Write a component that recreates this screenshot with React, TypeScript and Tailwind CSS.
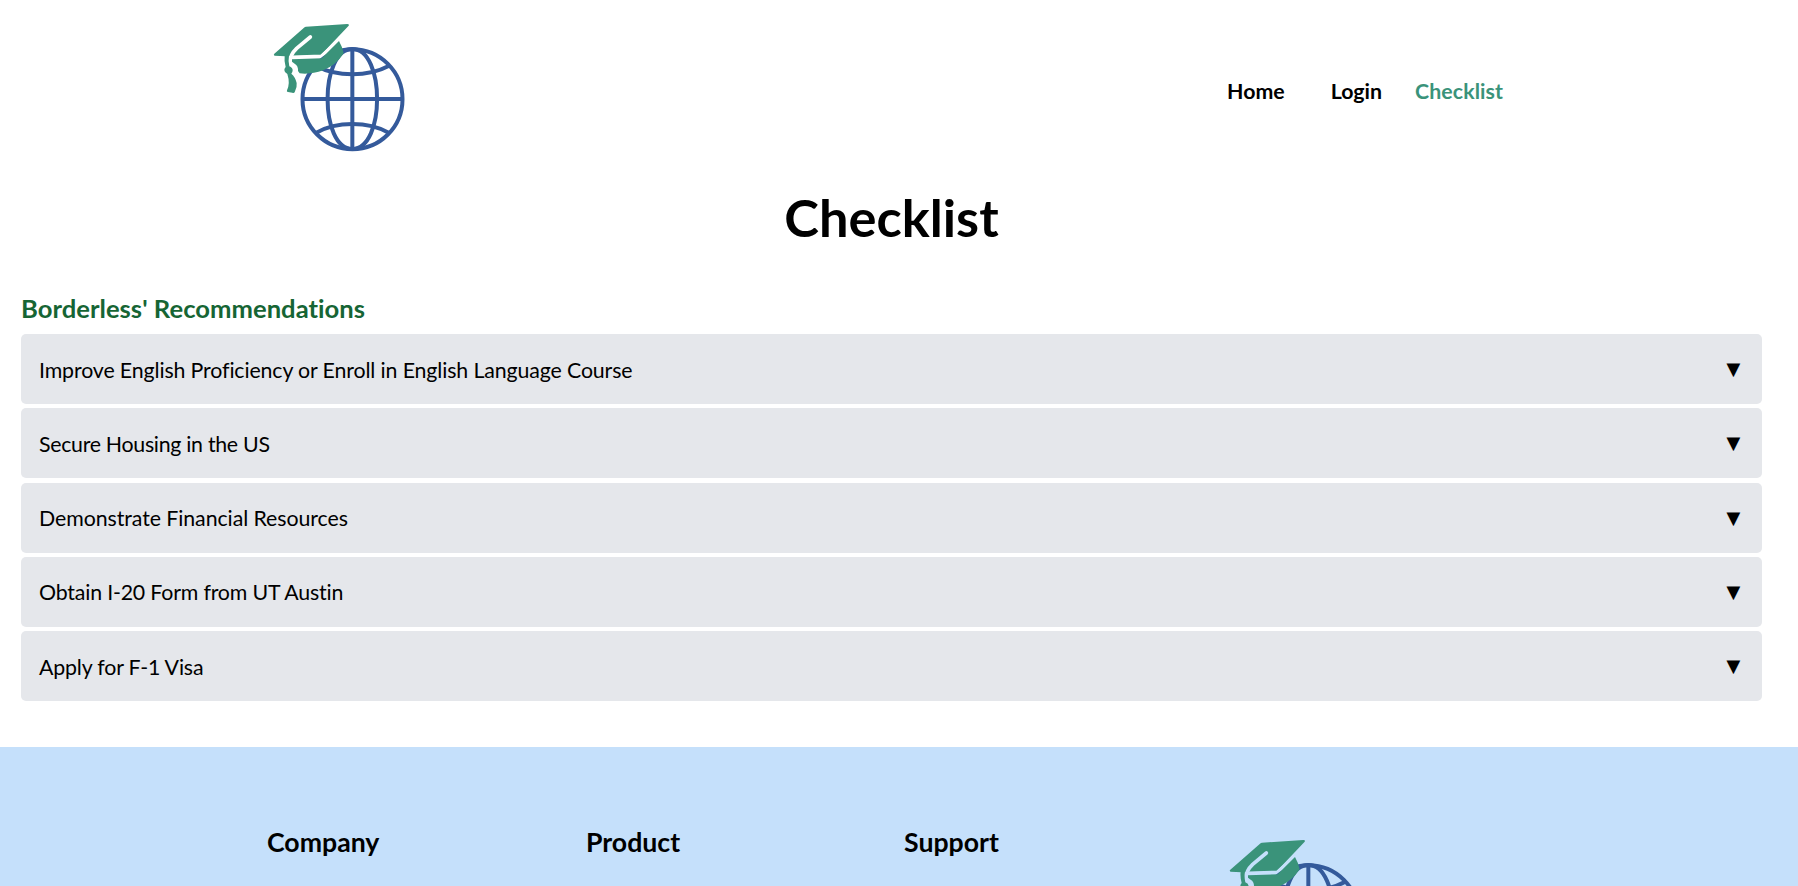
import React from "react";

function Logo({ id }: { id: string }) {
  return (
    <svg viewBox="0 0 480 450" className="block h-[150px] w-[160px] shrink-0" aria-label="Borderless">
      <defs>
        <mask id={id} maskUnits="userSpaceOnUse" x="0" y="0" width="480" height="450">
          <rect width="480" height="450" fill="white" />
          <path d="M151 81 L110 115 Q90 134 89 158" fill="none" stroke="black" strokeWidth="11" strokeLinecap="round" />
          <path d="M99 142 L184 139 L242 87" fill="none" stroke="black" strokeWidth="11" />
        </mask>
      </defs>
      <g fill="none" stroke="#345a9b" strokeWidth="12">
        <circle cx="277.500" cy="267.500" r="150" />
        <path d="M277 117V417M127 267H427" />
        <path d="M277 117C178 117 178 417 277 417M277 117C376 117 376 417 277 417" />
        <path d="M169 168Q215 193 277 193T386 168M169 368Q215 342 277 342T386 368" />
      </g>
      <path d="M96 148L185 145L237 93Q246 108 251 130Q228 166 190 181Q152 194 119 190L114 183Q115 167 104 161L96 155Z" fill="#3a937a" />
      <g fill="#3a937a" mask={`url(#${id})`}>
        <path d="M138 50L262 42Q269 42 266 47L182 136L76 139L44 137Q39 135 43 131L132 53Q135 50 138 50Z" />
      </g>
      <path d="M74 137L87 137Q84 152 88 169Q98 173 98 181Q98 187 94 191Q106 201 110 219Q112 232 104 247Q101 250 97 248L84 246Q79 246 81 241Q91 220 82 192Q73 188 73 180Q73 175 77 171Q72 152 74 137Z" fill="#3a937a" />
    </svg>
  );
}

const items = [
  { label: "Improve English Proficiency or Enroll in English Language Course", tracking: "tracking-[-0.125px]" },
  { label: "Secure Housing in the US", tracking: "tracking-[-0.29px]" },
  { label: "Demonstrate Financial Resources", tracking: "tracking-[-0.07px]" },
  { label: "Obtain I-20 Form from UT Austin", tracking: "tracking-[-0.18px]" },
  { label: "Apply for F-1 Visa", tracking: "tracking-[-0.17px]" },
];

export default function App() {
  return (
    <div className="h-[886px] overflow-hidden bg-white font-['Lato',sans-serif] text-black">
      <header className="flex h-[182px] items-start justify-between pl-[260px] pr-[295px] pt-[10px]">
        <Logo id="header-cap" />
        <nav className="flex pt-[65px] text-[21.33px] leading-8 font-bold">
          <a className="mr-[46px]">Home</a>
          <a className="mr-[33px]">Login</a>
          <a className="tracking-[0.08px] text-[#3a937a]">Checklist</a>
        </nav>
      </header>
      <main className="h-[565px] pl-[21px] pr-[36px]">
        <h1 className="text-center text-[52.4px] leading-[70px] font-bold">Checklist</h1>
        <h2 className="mt-[40px] text-[25.6px] leading-8 font-bold tracking-[0.03px] text-[#166534]">Borderless' Recommendations</h2>
        <ul className="mt-[10px] flex flex-col gap-[4.25px]">
          {items.map(({ label, tracking }) => (
            <li key={label} className="flex h-[70px] items-center justify-between rounded-[5px] bg-[#e5e7eb] pr-[17px] pl-[18px] text-[21.33px]">
              <span className={`pt-px leading-8 ${tracking}`}>{label}</span>
              <span className="pb-[2px] text-[23.5px] leading-8">▼</span>
            </li>
          ))}
        </ul>
      </main>
      <footer className="flex h-[139px] bg-[#c5e0fb] pl-[267px] text-[26.67px] leading-8 font-bold">
        <h3 className="w-[319px] pt-[79px]">Company</h3>
        <h3 className="w-[318px] pt-[79px]">Product</h3>
        <h3 className="w-[312px] pt-[79px]">Support</h3>
        <div className="pt-[79px]">
          <Logo id="footer-cap" />
        </div>
      </footer>
    </div>
  );
}
